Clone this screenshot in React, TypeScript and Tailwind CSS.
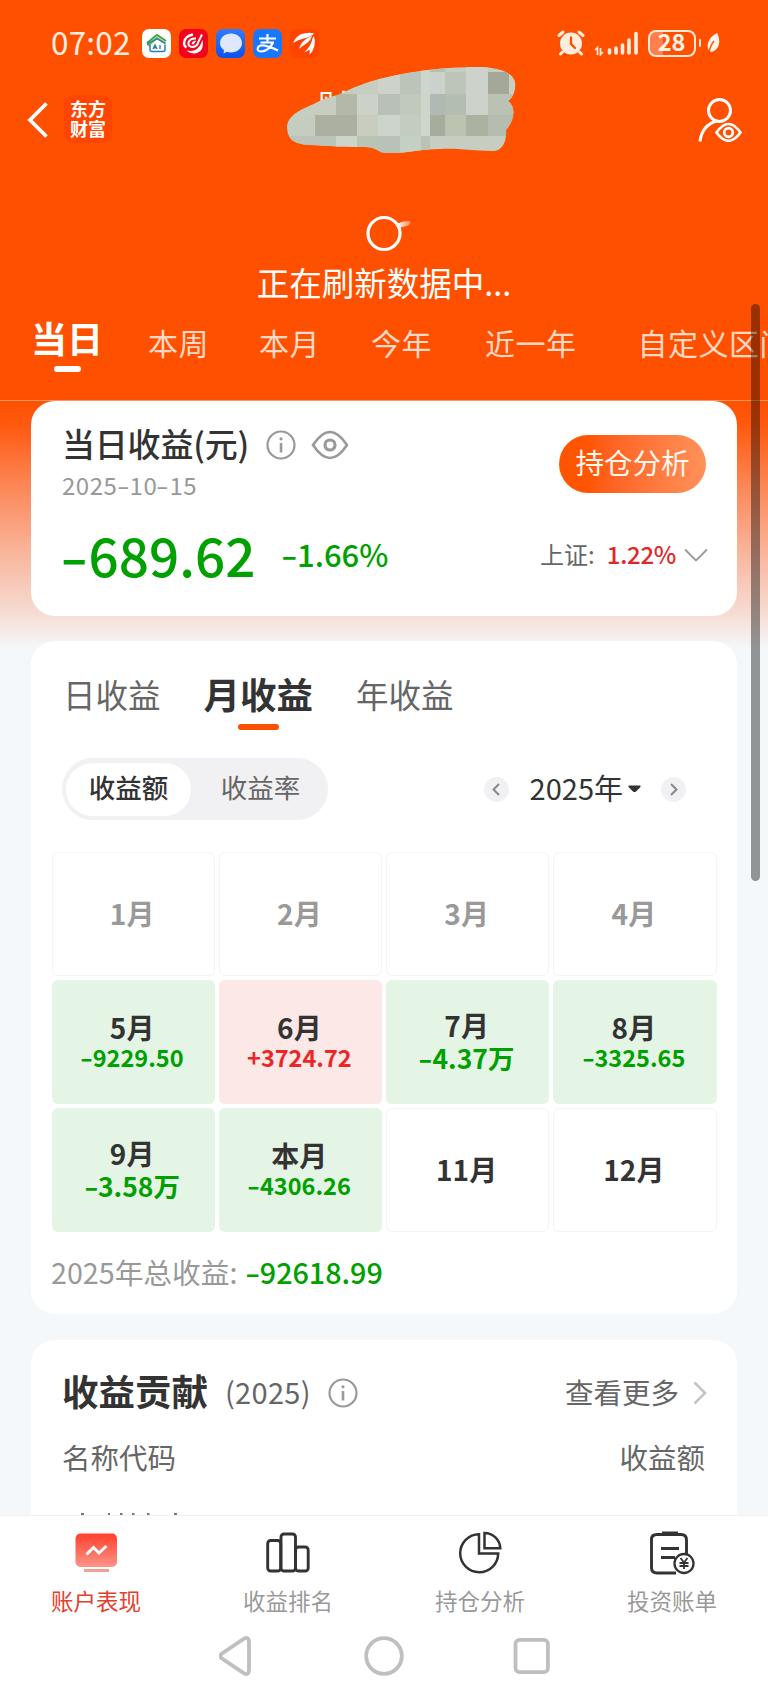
import type { ReactNode } from "react";

type Tile = [number, number, number, number, string];

const MOSAIC: Tile[] = [
  [430, 66, 15, 6, "#b9beb2"],
  [378, 72, 22, 22, "#cdd2ca"],
  [400, 72, 21, 22, "#bcc3b8"],
  [421, 66, 9, 70, "#cdd6ca"],
  [430, 72, 15, 22, "#cad2cb"],
  [445, 72, 21, 22, "#bcc5b8"],
  [466, 66, 22, 49, "#cdd3ca"],
  [488, 72, 21, 22, "#a5a798"],
  [509, 66, 8, 36, "#cbd0c4"],
  [315, 94, 21, 21, "#c9cdc0"],
  [336, 94, 21, 21, "#b4b8a8"],
  [357, 94, 21, 21, "#cdd2c9"],
  [378, 94, 22, 21, "#b9c0b8"],
  [400, 94, 21, 21, "#c1c9bd"],
  [430, 94, 15, 21, "#b0bab3"],
  [445, 94, 21, 21, "#b3bdb0"],
  [488, 94, 29, 21, "#bac2b4"],
  [294, 115, 21, 21, "#c5cdc0"],
  [315, 115, 42, 21, "#acb0a0"],
  [357, 115, 21, 21, "#c8cdc0"],
  [378, 115, 22, 21, "#cdd4cc"],
  [400, 115, 21, 21, "#c4ccc0"],
  [430, 115, 15, 21, "#a7ad9d"],
  [445, 115, 21, 21, "#bcc3b0"],
  [466, 115, 22, 21, "#abb2a0"],
  [488, 115, 29, 21, "#b4bdb0"],
  [286, 136, 50, 18, "#bcc3b8"],
  [336, 136, 21, 18, "#cdd5cb"],
  [357, 136, 21, 18, "#bac4b5"],
  [378, 136, 22, 18, "#b9c2b6"],
  [400, 136, 21, 18, "#c4d0c4"],
  [421, 136, 9, 18, "#b9c2b4"],
];

function AppIcon({ className, children }: { className: string; children: ReactNode }) {
  return (
    <svg viewBox="0 0 29 29" className={`h-[29px] w-[29px] rounded-[7px] ${className}`}>
      {children}
    </svg>
  );
}

function StatusBar() {
  return (
    <div className="flex h-[86px] shrink-0 items-center justify-between pl-[51px] pr-[48px]">
      <div className="flex items-center">
        <span className="mb-[5px] w-[91px] text-[31.500px] leading-8 tracking-[0.200px] text-[#ffeee0]">07:02</span>
        <div className="flex gap-2">
          <AppIcon className="bg-white">
            <path d="M5 14 15 6l9 6" fill="none" stroke="#3aa63f" strokeWidth="2" />
            <path d="M6 17 15 9l8 5" fill="none" stroke="#a5c63b" strokeWidth="2" />
            <path d="M5 15.500 15 9.500l8.500 5M8 15.500v5q0 2 2 2h11q2 0 2-2v-5" fill="none" stroke="#2a7fb0" strokeWidth="1.500" />
            <path d="m11 20 2-4 2 4m-3.200-1.200h2.400M18 16v4" fill="none" stroke="#1d78a8" strokeWidth="1.300" />
          </AppIcon>
          <AppIcon className="bg-[#f2051c]">
            <path d="M14 5.500Q5.500 7 5 14q0 3 2.500 4.500" fill="none" stroke="#fff" strokeWidth="2.400" />
            <path d="M17 9.500q-6-.5-7.500 4-.5 4.500 4 4.500 5-.5 6-5.500L23 5.500" fill="none" stroke="#fff" strokeWidth="2" />
            <path d="M16.500 12q-3 0-3.500 3 2 .5 3.500-3Z" fill="#fff" stroke="#fff" />
            <path d="M23.500 11q2 12-8 13.500-5 0-8-3 8 1.500 11-2 3.500-3.500 5-8.500Z" fill="#fff" />
          </AppIcon>
          <AppIcon className="bg-gradient-to-b from-[#2f7bff] to-[#0a50f0]">
            <path d="M15 4.500c6 0 11 4 11 9.500s-5 9.500-11 9.500c-1.500 0-3-.2-4.200-.7L7.500 24.500l.5-3.500C5.500 19.500 4 17 4 14c0-5.500 5-9.500 11-9.500Z" fill="#dfe8fb" />
          </AppIcon>
          <AppIcon className="bg-[#1677ff]">
            <path d="M6 9.500h17M14.500 5v9M7.500 13.500H21M20 13.500c-2 5-7 9-12 9-3 0-4-2-3-4 2-4 9-2 20 3" fill="none" stroke="#fff" strokeWidth="2.200" />
          </AppIcon>
          <AppIcon className="bg-[#ff4300]">
            <path d="M3 14Q6 5.500 15 4.200q5-.7 9 0-1 2.500-5 3.800Q10 10 3 14Z" fill="#fff" />
            <path d="M9 20Q11 12 19.500 8l2.500-.800Q21 11 17 14q-4 2.500-8 6Z" fill="#fff" />
            <path d="M14 23.500q7-6 8.500-14l1.500-2.500q3 11-4.500 19 .5-3 0-5.500-2.500 2.200-5.500 3Z" fill="#fff" />
          </AppIcon>
        </div>
      </div>
      <div className="flex items-center">
        <svg viewBox="0 0 28 26" className="mr-[9px] h-[26px] w-7">
          <circle cx="14" cy="13.500" r="11" fill="#ffeee0" />
          <path d="M2 5.500 6 2M26 5.500 22 2M5.500 22 3.500 24M22.500 22l2 2" stroke="#ffeee0" strokeWidth="3" strokeLinecap="round" />
          <path d="M14 7.500v6.500l4 4" fill="none" stroke="#ff5000" strokeWidth="2.400" strokeLinecap="round" />
        </svg>
        <svg viewBox="0 0 45 26" className="mr-[9px] h-[26px] w-[45px]">
          <path d="M15.500 20v3M22 18v5M28.500 15v8M35 10v13M42 3.500V23" stroke="#ffeee0" strokeWidth="3.600" strokeLinecap="round" />
          <path d="m1 20 2.500-2.500V25M6.500 18v6.500L9 22" fill="none" stroke="#ffeee0" strokeWidth="1.700" />
        </svg>
        <div className="flex h-[27px] w-[48px] items-center justify-center rounded-[8px] border-2 border-[#ffe9d8] bg-gradient-to-r from-[#ff804d] from-30% to-[#ff5000] to-30%">
          <span className="mb-[4px] text-[23.500px] font-bold leading-6 text-[#fff3ea]">28</span>
        </div>
        <span className="ml-[3px] mr-[5px] h-2 w-[2.500px] rounded bg-[#ffe9d8]" />
        <svg viewBox="0 0 14 22" className="h-[22px] w-3.5">
          <path d="M11 1c4 7 3 17-6 19C-1 17 1 6 11 1Z" fill="#fff3ea" />
          <path d="M3 21Q4 14 8 9" fill="none" stroke="#ff5000" strokeWidth="1.400" />
        </svg>
      </div>
    </div>
  );
}

function NavBar() {
  return (
    <div className="flex h-[66px] shrink-0 items-center pl-[27px] pr-[26px]">
      <svg viewBox="0 0 22 38" className="mt-[2px] h-[38px] w-[22px]">
        <path d="M19.500 2.500 3 19l16.500 16.500" fill="none" stroke="#fff" strokeWidth="3.800" />
      </svg>
      <div className="ml-[15px] flex h-12 w-12 flex-col items-center justify-center rounded-[10px] bg-[#ff4500] pb-[2px] text-[18px] font-bold leading-[20.500px] text-white">
        <span>东方</span>
        <span>财富</span>
      </div>
      <div className="relative ml-[206px] flex h-10 w-[196px] items-start">
        <span className="-mt-[13px] text-[32px] leading-9 text-white">财</span>
        <svg viewBox="286 66 230 88" className="absolute -left-8 -top-[33px] h-[88px] w-[230px]">
          <defs>
            <clipPath id="smudge">
              <path d="M287 128C287 114 303 109 320 101 326 98 332 97 338 95 352 88 366 82 384 78 415 70 450 67 480 67 500 68 512 72 515 82 516 92 512 98 508 101 516 106 515 120 506 130 507 142 502 151 493 151 470 151 460 148 440 149 420 149 410 153 390 153 378 154 378 147 365 147 345 147 330 146 310 145 292 144 288 138 287 128Z" />
            </clipPath>
          </defs>
          <g clipPath="url(#smudge)">
            <rect x="286" y="66" width="230" height="88" fill="#c5cec1" />
            {MOSAIC.map(([x, y, w, h, fill], i) => (
              <rect key={i} x={x} y={y} width={w} height={h} fill={fill} />
            ))}
          </g>
        </svg>
      </div>
      <svg viewBox="0 0 44 44" className="ml-auto mt-[1px] h-11 w-11" fill="none" stroke="#fff" strokeWidth="3">
        <circle cx="21.500" cy="12.500" r="11" />
        <path d="M2 43.500Q4 27 19 23" />
        <path d="M18.500 34.500Q30.500 17.500 42.500 34.500 30.500 51 18.500 34.500Z" strokeWidth="2.700" />
        <circle cx="30.500" cy="34.500" r="4.300" strokeWidth="2.700" />
      </svg>
    </div>
  );
}

function Header() {
  return (
    <header className="flex h-[400px] shrink-0 flex-col bg-[#ff5000]">
      <StatusBar />
      <NavBar />
      <div className="flex h-[156px] shrink-0 flex-col items-center pt-[62px] text-white">
        <svg viewBox="0 0 60 40" className="h-10 w-[60px]">
          <defs>
            <linearGradient id="tail">
              <stop offset="0" stopColor="#fff" />
              <stop offset="1" stopColor="#ff8a55" />
            </linearGradient>
          </defs>
          <circle cx="30" cy="19.500" r="16" fill="none" stroke="#fff" strokeWidth="3.200" />
          <path d="M43.500 9.500q6-3 12.500-2.500 1 3-2 4.500l-9 2.500Z" fill="url(#tail)" />
        </svg>
        <span className="mt-[9px] text-[32.500px] leading-[38px]">正在刷新数据中...</span>
      </div>
      <div className="flex items-start whitespace-nowrap text-[30px] leading-[34px] text-[#ffd9c5]">
        <div className="ml-[31px] mt-[9px] flex w-[72px] flex-col items-center">
          <span className="text-[36px] font-bold leading-[40px] text-white">当日</span>
          <span className="mt-[9px] h-1.5 w-[27px] rounded-full bg-white" />
        </div>
        <span className="ml-[45px] mt-[17px] tracking-[0.500px]">本周</span>
        <span className="ml-[50px] mt-[17px] tracking-[0.500px]">本月</span>
        <span className="ml-[51px] mt-[17px] tracking-[0.500px]">今年</span>
        <span className="ml-[53px] mt-[17px] tracking-[0.500px]">近一年</span>
        <span className="ml-[61px] mt-[17px] tracking-[0.500px]">自定义区间</span>
      </div>
    </header>
  );
}

function InfoIcon() {
  return (
    <svg viewBox="0 0 30 30" className="h-[30px] w-[30px]" fill="none" stroke="#999">
      <circle cx="15" cy="15" r="13.500" strokeWidth="2.200" />
      <path d="M15 13v9.500" strokeWidth="2.600" />
      <circle cx="15" cy="8.800" r="1.600" fill="#999" stroke="none" />
    </svg>
  );
}

function Minus() {
  return <span className="-ml-[0.03em] mr-[0.174em] inline-block origin-left scale-x-150">-</span>;
}

function TodayCard() {
  return (
    <section className="flex h-[215px] shrink-0 flex-col rounded-[24px] bg-white px-[31px]">
      <div className="flex h-[96px] justify-between">
        <div>
          <div className="flex items-center pt-[23px]">
            <h1 className="mb-[3px] w-[204px] text-[33px] font-medium leading-[38px] tracking-[-0.200px] text-[#333]">当日收益(元)</h1>
            <InfoIcon />
            <svg viewBox="0 0 38 30" className="ml-[15px] h-[30px] w-[38px]" fill="none" stroke="#999" strokeWidth="2.600">
              <path d="M2 15C8 6 13 2 19 2s11 4 17 13C30 24 25 28 19 28S8 24 2 15Z" />
              <circle cx="19" cy="15" r="5" strokeWidth="3.200" />
            </svg>
          </div>
          <div className="mt-[6px] text-[24px] leading-7 tracking-[0.500px] text-[#999]">
            2025<Minus />10<Minus />15
          </div>
        </div>
        <button className="mt-[34px] h-[58px] w-[147px] rounded-full bg-gradient-to-r from-[#ff5500] from-20% to-[#ff9159] pb-[4px] text-[28.500px] leading-none text-[#fff8ee]">
          持仓分析
        </button>
      </div>
      <div className="mr-[-2px] mt-[30px] flex h-[54px] items-center font-medium text-[#00a000]">
        <span className="text-[53px] leading-[54px]">
          <Minus />689.62
        </span>
        <span className="ml-[26px] text-[31px] leading-[54px]">
          <Minus />1.66%
        </span>
        <span className="ml-auto text-[24px] font-normal leading-9 text-[#666]">上证:</span>
        <span className="ml-3 text-[24px] leading-9 tracking-[-0.300px] text-[#e02828]">1.22%</span>
        <svg viewBox="0 0 24 14" className="ml-2 mt-[2px] h-3.5 w-6">
          <path d="m1 1.500 11 11 11-11" fill="none" stroke="#999" strokeWidth="1.800" />
        </svg>
      </div>
    </section>
  );
}

type Month = { label: string; value?: string; tone?: "up" | "down"; muted?: boolean };

const MONTHS: Month[] = [
  { label: "1月", muted: true },
  { label: "2月", muted: true },
  { label: "3月", muted: true },
  { label: "4月", muted: true },
  { label: "5月", value: "-9229.50", tone: "down" },
  { label: "6月", value: "+3724.72", tone: "up" },
  { label: "7月", value: "-4.37万", tone: "down" },
  { label: "8月", value: "-3325.65", tone: "down" },
  { label: "9月", value: "-3.58万", tone: "down" },
  { label: "本月", value: "-4306.26", tone: "down" },
  { label: "11月" },
  { label: "12月" },
];

function MonthCell({ month }: { month: Month }) {
  const { label, value, tone, muted } = month;
  const bg =
    tone === "down"
      ? "bg-[#e4f5e6]"
      : tone === "up"
        ? "bg-[#fde8e8]"
        : "border-[1.500px] border-[#f4f4f4]";
  const size = value?.endsWith("万") ? "text-[26.500px] leading-[33px]" : "text-[23.500px] leading-[29px]";
  const color = tone === "up" ? "text-[#ee2525]" : "text-[#00a000]";
  return (
    <div className={`flex flex-col items-center justify-center rounded-[6px] pb-[2px] pr-[2px] font-bold ${bg}`}>
      <span className={`text-[28px] leading-8 ${muted ? "text-[#999]" : "text-[#333]"}`}>{label}</span>
      {value && (
        <span className={`${size} ${color}`}>
          {value.startsWith("-") ? (
            <>
              <Minus />
              {value.slice(1)}
            </>
          ) : (
            value
          )}
        </span>
      )}
    </div>
  );
}

function StepButton({ d }: { d: string }) {
  return (
    <svg viewBox="0 0 25 25" className="h-[25px] w-[25px] rounded-full bg-[#f1f1f4]">
      <path d={d} fill="none" stroke="#888" strokeWidth="2" />
    </svg>
  );
}

function MonthlyCard() {
  return (
    <section className="mt-[25px] flex h-[673px] shrink-0 flex-col rounded-[24px] bg-white">
      <div className="flex pl-8 text-[32.500px] leading-[38px] text-[#666]">
        <span className="mt-[34px]">日收益</span>
        <div className="ml-[43px] mt-[33px] flex flex-col items-center">
          <span className="text-[36.500px] font-bold leading-[40px] text-[#333]">月收益</span>
          <span className="mt-[10px] h-1.5 w-[41px] rounded-full bg-[#fa5000]" />
        </div>
        <span className="ml-[43px] mt-[34px]">年收益</span>
      </div>
      <div className="ml-[31px] mr-[51px] mt-[28px] flex h-[62px] items-center">
        <div className="flex h-[62px] w-[266px] rounded-full bg-[#f1f1f4] p-1 pt-[5px] text-[26.500px] leading-[48px]">
          <span className="h-[53px] w-[125px] rounded-full bg-white text-center font-medium text-[#333]">收益额</span>
          <span className="h-[53px] flex-1 pl-1.5 text-center text-[#666]">收益率</span>
        </div>
        <div className="ml-auto flex items-center">
          <StepButton d="m15 7-5.500 5.500L15 18" />
          <span className="mb-[4px] ml-[21px] text-[29px] leading-9 text-[#333]">2025年</span>
          <svg viewBox="0 0 13 8" className="ml-[5px] mr-[20px] h-2 w-[13px]">
            <path d="M.5.500h12v1.500L8 6.500q-1.500 1.200-3 0L.5 2Z" fill="#333" />
          </svg>
          <StepButton d="m10 7 5.500 5.500L10 18" />
        </div>
      </div>
      <div className="ml-[20.500px] mt-[32px] grid h-[380px] w-[665px] grid-cols-4 grid-rows-3 gap-1">
        {MONTHS.map((month) => (
          <MonthCell key={month.label} month={month} />
        ))}
      </div>
      <div className="ml-[20px] mt-[22px] whitespace-nowrap text-[28.700px] leading-9 text-[#999]">
        2025年总收益:
        <span className="ml-[8px] font-medium text-[#00a000]">
          <Minus />92618.99
        </span>
      </div>
    </section>
  );
}

function ContributionCard() {
  return (
    <section className="mt-[26px] flex h-[175px] shrink-0 flex-col overflow-hidden rounded-t-[24px] bg-white pl-[31px] pr-8 text-[28.500px] text-[#666]">
      <div className="flex items-center pt-[29px]">
        <h2 className="mb-1 text-[36.500px] font-bold leading-[44px] text-[#333]">收益贡献</h2>
        <span className="mb-1 ml-[17px] w-[103px] text-[29px] leading-9 tracking-[0.300px]">(2025)</span>
        <InfoIcon />
        <span className="mb-[3px] ml-auto leading-9">查看更多</span>
        <svg viewBox="0 0 14 24" className="ml-[14px] mr-[-2px] h-6 w-3.5">
          <path d="m1.500 1.500 10.500 10.500L1.500 22.500" fill="none" stroke="#c4c4c4" strokeWidth="2.500" />
        </svg>
      </div>
      <div className="mt-[22px] flex justify-between leading-9">
        <span>名称代码</span>
        <span>收益额</span>
      </div>
      <svg viewBox="63 0 120 2" className="mt-auto h-[2px] w-[120px] shrink-0">
        <path d="M82 1h3M109 1h2M121 1h2.500M133 1h2.500M148 1h2.500M175 1h3" stroke="#777" strokeWidth="2" />
      </svg>
    </section>
  );
}

function TabItem({ label, active, children }: { label: string; active?: boolean; children: ReactNode }) {
  return (
    <div className="flex flex-1 flex-col items-center pt-[15px]">
      <svg viewBox="0 0 46 46" className="h-[46px] w-[46px]" fill="none" stroke="#333" strokeWidth="2.900">
        {children}
      </svg>
      <span className={`mt-[9px] text-[22.500px] leading-7 ${active ? "text-[#e0412c]" : "text-[#999]"}`}>{label}</span>
    </div>
  );
}

function BottomBar() {
  return (
    <footer className="flex h-[173px] shrink-0 flex-col border-t border-[#eef0f1] bg-white">
      <div className="flex h-[105px]">
        <TabItem label="账户表现" active>
          <defs>
            <linearGradient id="screen" x1="0" y1="0" x2="0" y2="1">
              <stop offset="0" stopColor="#ff3f2a" />
              <stop offset="1" stopColor="#fb9588" />
            </linearGradient>
          </defs>
          <rect x="2.500" y="2.500" width="41.500" height="33.500" rx="5" fill="url(#screen)" stroke="none" />
          <path d="M11 39.500h25" stroke="#f0a095" strokeWidth="3" />
          <path d="m13.500 23.500 7-7 5.500 5.500 7.500-7" stroke="#fff" strokeWidth="3" />
        </TabItem>
        <TabItem label="收益排名">
          <rect x="2.700" y="9.500" width="13" height="30.500" rx="3" />
          <rect x="16" y="3" width="14.500" height="37" rx="3" />
          <rect x="30.500" y="16" width="12.700" height="24" rx="3" />
        </TabItem>
        <TabItem label="持仓分析">
          <path d="M22 3.300v19.200h19.200A19 19 0 1 1 22 3.300Z" strokeWidth="2.500" />
          <path d="M27.500 2v15.200h15.800A16 16 0 0 0 27.500 2Z" strokeWidth="2.500" />
        </TabItem>
        <TabItem label="投资账单">
          <path d="M27 42H8q-5.500 0-5.500-5.500v-28Q2.500 3.500 8 3.500h24q5.500 0 5.500 5.500v14" />
          <path d="M13 2h16M12 17.500h18M12 26.500h14" strokeWidth="3" />
          <circle cx="35" cy="32.500" r="9.500" strokeWidth="2.300" />
          <path d="m31.500 27 3.500 4.500 3.500-4.500M35 31.500V38M30.500 32h9M30.500 35h9" strokeWidth="1.800" />
        </TabItem>
      </div>
      <div className="flex items-start pl-[219px] pt-[14px]">
        <svg viewBox="0 0 332 42" className="h-[42px] w-[332px]" fill="none" stroke="#bfbfbf" strokeWidth="3.800">
          <path d="M3 18.500 25 3.700q5-2.500 5 3.500v27.600q0 6-5 3.500L3 23.500q-3-2.700 0-5Z" />
          <circle cx="165" cy="21" r="17.800" />
          <rect x="296.500" y="4.800" width="32.400" height="32.400" rx="4" />
        </svg>
      </div>
    </footer>
  );
}

export default function App() {
  return (
    <div className="relative flex h-[1688px] w-[768px] flex-col overflow-hidden bg-[#f4f8fa] font-['Noto_Sans_CJK_SC',sans-serif]">
      <Header />
      <main className="flex h-[1115px] shrink-0 flex-col border-t border-[#f59a60] bg-[linear-gradient(180deg,#ff5000_0px,#ff5a10_25px,#fc8a5c_90px,#f9b49a_150px,#f6dcd3_212px,#f4f8fa_248px)] px-[31px]">
        <TodayCard />
        <MonthlyCard />
        <ContributionCard />
      </main>
      <BottomBar />
      <div className="absolute left-[751px] top-[304px] h-[577px] w-[8.500px] rounded-full bg-black/40" />
    </div>
  );
}
